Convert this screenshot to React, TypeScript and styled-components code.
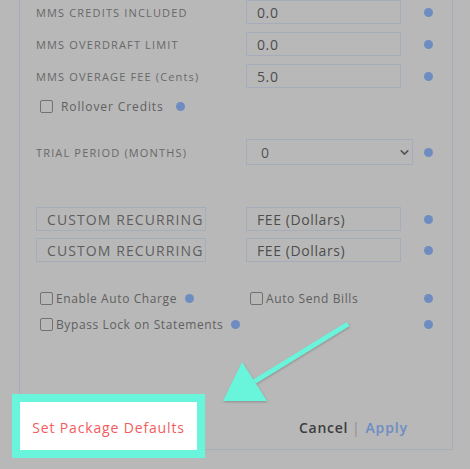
import styled, { createGlobalStyle } from 'styled-components'
import { ChevronDown } from 'lucide-react'

const GlobalStyle = createGlobalStyle`
  html, body {
    margin: 0;
    padding: 0;
    background: #b8b8b8;
  }
  body {
    font-family: 'Open Sans', 'DejaVu Sans', sans-serif;
  }
`

const Page = styled.div`
  position: relative;
  width: 470px;
  height: 469px;
  overflow: hidden;
`

const Panel = styled.div`
  box-sizing: border-box;
  margin-left: 19px;
  width: 434px;
  height: 450px;
  border: 1px solid #a7aebb;
  border-top: none;
  padding-left: 16px;
  display: flex;
  flex-direction: column;
`

const Row = styled.div<{ $mt?: number; $h?: number }>`
  display: grid;
  grid-template-columns: 210px 178px 9px;
  align-items: center;
  height: ${(p) => p.$h ?? 24}px;
  margin-top: ${(p) => p.$mt ?? 0}px;
`

const Label = styled.span`
  font-size: 11px;
  letter-spacing: 1.15px;
  color: #686868;
  white-space: nowrap;
`

const Box = styled.div<{ $w: number; $caps?: boolean }>`
  box-sizing: border-box;
  width: ${(p) => p.$w}px;
  height: 24px;
  border: 1px solid #a5adba;
  display: flex;
  align-items: center;
  padding-left: 10px;
  font-size: 14px;
  letter-spacing: ${(p) => (p.$caps ? 1.1 : 0.6)}px;
  color: ${(p) => (p.$caps ? '#5e5e5e' : '#4e4e4e')};
  white-space: nowrap;
`

const Select = styled.div`
  box-sizing: border-box;
  width: 167px;
  height: 26px;
  border: 1px solid #a5adba;
  display: flex;
  align-items: center;
  justify-content: space-between;
  padding: 0 1px 0 14px;
  font-size: 14px;
  color: #555;
`

const Dot = styled.span`
  display: block;
  flex: none;
  width: 9px;
  height: 9px;
  border-radius: 50%;
  background: #6f8cc1;
`

const Check = styled.label<{ $ls?: number }>`
  display: flex;
  align-items: center;
  padding-left: 4px;
  font-size: 12px;
  letter-spacing: ${(p) => p.$ls ?? 0.6}px;
  color: #606060;
  white-space: nowrap;
`

const CheckBox = styled.span<{ $gap: number }>`
  box-sizing: border-box;
  width: 13px;
  height: 13px;
  border: 1.5px solid #727272;
  border-radius: 2px;
  margin-right: ${(p) => p.$gap}px;
  flex: none;
`

const InlineDot = styled(Dot)<{ $ml: number }>`
  margin-left: ${(p) => p.$ml}px;
`

const Separator = styled.div`
  margin-top: 64px;
  margin-left: -6px;
  width: 411px;
  height: 1px;
  background: #97a3b7;
`

const Footer = styled.div`
  display: flex;
  align-items: flex-start;
  justify-content: space-between;
  margin-left: -16px;
  padding-right: 44px;
`

const DefaultsButton = styled.button`
  box-sizing: border-box;
  margin-top: 8px;
  width: 177px;
  height: 48px;
  background: #fff;
  border: none;
  box-shadow: 0 0 0 1px #d6d6d6;
  outline: 8px solid #69f4dc;
  font-family: 'Open Sans', sans-serif;
  font-size: 14px;
  letter-spacing: 0.85px;
  color: #f35c5c;
  padding: 2px 0 0 0;
`

const Actions = styled.div`
  margin-top: 24px;
  font-size: 14px;
  font-weight: 600;
  letter-spacing: 0.7px;
  color: #3d3d3d;
`

const Pipe = styled.span`
  color: #8d8d8d;
  font-weight: 400;
  margin: 0 5px 0 4px;
`

const Apply = styled.span`
  color: #6c8dc4;
  letter-spacing: 0.9px;
`

const Arrow = styled.svg`
  position: absolute;
  left: 0;
  top: 0;
  pointer-events: none;
`

export default function App() {
  return (
    <Page>
      <GlobalStyle />
      <Panel>
        <Row>
          <Label>MMS CREDITS INCLUDED</Label>
          <Box $w={155}>0.0</Box>
          <Dot />
        </Row>
        <Row $mt={8}>
          <Label>MMS OVERDRAFT LIMIT</Label>
          <Box $w={155}>0.0</Box>
          <Dot />
        </Row>
        <Row $mt={8}>
          <Label>MMS OVERAGE FEE (Cents)</Label>
          <Box $w={155}>5.0</Box>
          <Dot />
        </Row>
        <Row $mt={10} $h={14}>
          <Check $ls={0.9}>
            <CheckBox $gap={8} />
            Rollover Credits
            <InlineDot $ml={12} />
          </Check>
        </Row>
        <Row $mt={27} $h={26}>
          <Label>TRIAL PERIOD (MONTHS)</Label>
          <Select>
            0
            <ChevronDown size={13} strokeWidth={3} color="#555" />
          </Select>
          <Dot />
        </Row>
        <Row $mt={42}>
          <Box $w={170} $caps>CUSTOM RECURRING</Box>
          <Box $w={155}>FEE (Dollars)</Box>
          <Dot />
        </Row>
        <Row $mt={7}>
          <Box $w={170} $caps>CUSTOM RECURRING</Box>
          <Box $w={155}>FEE (Dollars)</Box>
          <Dot />
        </Row>
        <Row $mt={28} $h={14}>
          <Check>
            <CheckBox $gap={3} />
            Enable Auto Charge
            <InlineDot $ml={8} />
          </Check>
          <Check>
            <CheckBox $gap={3} />
            Auto Send Bills
          </Check>
          <Dot />
        </Row>
        <Row $mt={12} $h={14}>
          <Check>
            <CheckBox $gap={3} />
            Bypass Lock on Statements
            <InlineDot $ml={8} />
          </Check>
          <span />
          <Dot />
        </Row>
        <Separator />
        <Footer>
          <DefaultsButton>Set Package Defaults</DefaultsButton>
          <Actions>
            Cancel<Pipe>|</Pipe><Apply>Apply</Apply>
          </Actions>
        </Footer>
      </Panel>
      <Arrow width="470" height="469" viewBox="0 0 470 469">
        <defs>
          <filter id="sh" x="-20%" y="-20%" width="140%" height="140%">
            <feDropShadow dx="0.5" dy="1" stdDeviation="0.8" floodColor="#000" floodOpacity="0.25" />
          </filter>
        </defs>
        <g filter="url(#sh)" fill="#69f4dc">
          <polygon points="346.7,321.9 349.3,326.1 255.8,383.6 253.2,379.4" />
          <polygon points="223,401 242,362 267,401" />
        </g>
      </Arrow>
    </Page>
  )
}
